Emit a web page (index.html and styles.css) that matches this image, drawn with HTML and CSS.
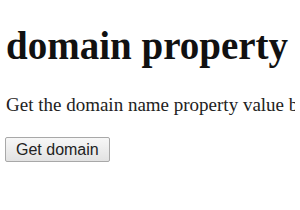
FILE: index.html
```html
<!DOCTYPE html>
<html lang="en">
<head>
    <meta charset="UTF-8">
    <title>domain property</title>
    <link rel="stylesheet" href="styles.css">
</head>
<body>
    <h1>domain property</h1>
    <p class="intro">Get the domain name property value by clicking the button.</p>
    <button class="btn">Get domain</button>
</body>
</html>
```

FILE: styles.css
```css
body {
    font-family: "Liberation Serif", serif;
    color: #111;
    background-color: #fff;
    margin: 0 5px;
    overflow: hidden;
}

h1 {
    font-size: 39px;
    margin: 23px 0 24px 1px;
}

.intro {
    font-size: 19px;
    white-space: nowrap;
    color: #222;
    margin: 0 0 21px 1px;
    padding-top: 2px;
}

.btn {
    font-family: "Liberation Sans", Arial, sans-serif;
    font-size: 16px;
    color: #222;
    height: 25px;
    padding: 0 10px;
    border: 1px solid #a8a8a8;
    border-radius: 2px;
    background: linear-gradient(#f7f7f7, #e2e2e2);
}
```
